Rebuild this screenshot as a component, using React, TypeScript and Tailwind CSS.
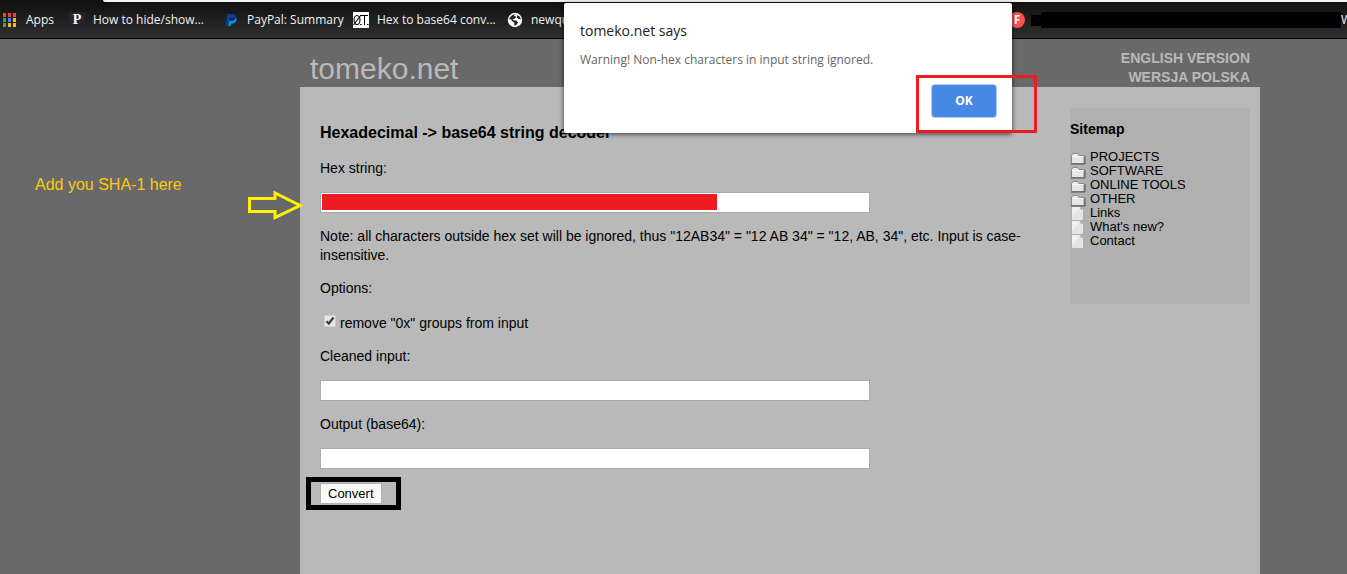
import React from "react";

const uiFont = "font-['Open_Sans','Noto_Sans',sans-serif]";

function AppsIcon() {
  const colors = [
    "#f44336", "#f44336", "#f44336",
    "#34a853", "#4285f4", "#fbbc05",
    "#34a853", "#fbbc05", "#fbbc05",
  ];
  return (
    <svg width="16" height="16" viewBox="0 0 16 16" aria-hidden="true">
      {colors.map((c, i) => (
        <rect key={i} x={1 + (i % 3) * 5} y={1 + Math.floor(i / 3) * 5} width="3" height="4" fill={c} />
      ))}
    </svg>
  );
}

function PIcon() {
  return (
    <span className="flex h-4 w-4 items-center justify-center bg-[#23252e] font-['Liberation_Serif',serif] text-[14px] leading-4 font-bold text-white">
      P
    </span>
  );
}

function PayPalIcon() {
  return (
    <svg width="16" height="16" viewBox="0 0 16 16" aria-hidden="true">
      <path d="M6.2 5h5.6c1.6.7 2 2 1.6 3.6-.5 2-2 2.900-4 2.900h-1L7.700 14H5z" fill="#009cde" />
      <path d="M4.600 2h5c2.500 0 3.700 1.300 3.200 3.600-.5 2.500-2.300 3.400-4.600 3.400H6.400L5.500 13H2.600z" fill="#0b3f9a" />
      <path d="M6.900 6h5.600c-.8 2.300-2.400 3-4.300 3H6.400z" fill="#012169" />
    </svg>
  );
}

function ZeroTIcon() {
  return (
    <svg width="16" height="16" viewBox="0 0 16 16" aria-hidden="true">
      <rect width="16" height="16" fill="#fff" />
      <g fill="none" stroke="#000" strokeWidth="1.1">
        <ellipse cx="4" cy="8" rx="3" ry="4.500" />
        <path d="M0.500 13L8 3M8 3.500h7M11.500 3.500v9.500M7 12.500h1.500M14 12.500h1.500" />
      </g>
    </svg>
  );
}

function GlobeIcon() {
  return (
    <svg width="16" height="16" viewBox="0 0 16 16" aria-hidden="true">
      <circle cx="8" cy="8" r="7.200" fill="#fff" />
      <path
        d="M2 7.500C3 4.500 5.500 2.500 8 2.300L7 4l2 .6-.5 1.700-2.500.8.300 1.200 3 .2 1.700 1.700-1.200 2.300-2.600 1.300.2-3-2-1.300L4 7.200z"
        fill="#222"
      />
      <path d="M10.300 3l2.600 1.700 1 2.600-2.400-.4-1.500-1.700z" fill="#222" />
    </svg>
  );
}

function FIcon() {
  return (
    <span className="flex h-4 w-4 items-center justify-center rounded-full bg-[#fb5252] text-[12px] leading-4 font-bold text-white">
      F
    </span>
  );
}

function Bookmark({ icon, label, width }: { icon: React.ReactNode; label: string; width: string }) {
  return (
    <a href="#" className={`flex shrink-0 items-center gap-2 whitespace-nowrap ${width}`}>
      {icon}
      {label}
    </a>
  );
}

function BookmarksBar() {
  return (
    <div className="bg-[#111]">
      <div className="ml-[103px] h-0.5 rounded-bl-sm bg-[#f1f3f4]" />
      <nav
        className={`flex h-[37px] items-center overflow-hidden border-b border-black bg-linear-to-b from-[#111] to-[#303030] pl-0.5 text-[12px] leading-4 text-[#f1f1f1] ${uiFont}`}
      >
        <Bookmark icon={<AppsIcon />} label="Apps" width="w-[67px]" />
        <Bookmark icon={<PIcon />} label="How to hide/show..." width="w-[154px]" />
        <Bookmark icon={<PayPalIcon />} label="PayPal: Summary" width="w-[130px]" />
        <Bookmark icon={<ZeroTIcon />} label="Hex to base64 conv..." width="w-[154px]" />
        <Bookmark icon={<GlobeIcon />} label="newqu" width="w-[502px]" />
        <FIcon />
        <div className="ml-1.5 flex min-w-0 flex-1 items-center">
          <span className="h-[11px] w-2.5 bg-black" />
          <span className="h-4 flex-1 bg-black" />
          <span className="w-1.5 overflow-hidden">W</span>
        </div>
      </nav>
    </div>
  );
}

function FolderIcon() {
  return (
    <svg width="16" height="13" viewBox="0 0 16 13" aria-hidden="true">
      <path d="M1.500 3.500L3 1.500h4.500L9 3.500h5v8H1.500z" fill="#e6e6e6" stroke="#8a8a8a" />
      <path d="M2.500 4.500h11M3.500 2.500h3.500" stroke="#fafafa" />
      <path d="M1 12h14V4" fill="none" stroke="#555" />
    </svg>
  );
}

function PageIcon() {
  return (
    <svg width="16" height="14" viewBox="0 0 16 14" aria-hidden="true">
      <path d="M2 1h8.500L13 3.500V14H2z" fill="#e4e4e4" />
      <path d="M2 1h8.500L2 11z" fill="#f0f0f0" />
      <path d="M10.500 1L13 3.500h-2.500z" fill="#999" />
    </svg>
  );
}

const sitemap = [
  { label: "PROJECTS", folder: true },
  { label: "SOFTWARE", folder: true },
  { label: "ONLINE TOOLS", folder: true },
  { label: "OTHER", folder: true },
  { label: "Links", folder: false },
  { label: "What's new?", folder: false },
  { label: "Contact", folder: false },
];

function Sitemap() {
  return (
    <aside className="mt-[21px] h-[196px] w-[180px] shrink-0 bg-[#b0b0b0] pt-3">
      <h2 className="text-[14px] leading-[19px] font-bold">Sitemap</h2>
      <ul className="mt-[11px] text-[13px] leading-[14px]">
        {sitemap.map((item) => (
          <li key={item.label}>
            <a href="#" className="flex h-3.5 items-start gap-1">
              <span className={item.folder ? "w-4 pt-0.5" : "w-4"}>{item.folder ? <FolderIcon /> : <PageIcon />}</span>
              {item.label}
            </a>
          </li>
        ))}
      </ul>
    </aside>
  );
}

const fieldClass = "block h-[21px] w-full max-w-[550px] border border-[#a9a9a9] bg-white px-0.5 text-[13px] outline-none";

function Decoder() {
  return (
    <main className="min-w-0 flex-1 pt-[35px] text-[14px] leading-[19px]">
      <h1 className="text-[16px] leading-[22px] font-bold">Hexadecimal -&gt; base64 string decoder</h1>
      <form className="mt-[15px] flex flex-col items-start gap-3.5" onSubmit={(e) => e.preventDefault()}>
        <label htmlFor="hex">Hex string:</label>
        <div className="relative w-full max-w-[550px]">
          <input id="hex" type="text" className={fieldClass} />
          <div className="absolute top-0.5 left-0.5 h-4 w-[395px] bg-[#ed1c24]" />
        </div>
        <p>
          Note: all characters outside hex set will be ignored, thus "12AB34" = "12 AB 34" = "12, AB, 34", etc. Input is
          case-insensitive.
        </p>
        <p>Options:</p>
        <div className="flex h-[21px] items-end gap-1 pl-1">
          <span className="relative mb-1.5 h-3 w-3">
            <input
              id="strip"
              type="checkbox"
              defaultChecked
              className="peer block h-3 w-3 appearance-none rounded-[1px] border border-[#cfcfcf] bg-[#e8e8e8]"
            />
            <svg
              className="pointer-events-none absolute inset-0 hidden peer-checked:block"
              width="12"
              height="12"
              viewBox="0 0 12 12"
              aria-hidden="true"
            >
              <path d="M2.500 6.200L4.800 8.500L9.500 2.500" fill="none" stroke="#3c3c3c" strokeWidth="2.200" />
            </svg>
          </span>
          <label htmlFor="strip">remove "0x" groups from input</label>
        </div>
        <label htmlFor="cleaned">Cleaned input:</label>
        <input id="cleaned" type="text" className={fieldClass} />
        <label htmlFor="output">Output (base64):</label>
        <input id="output" type="text" className={fieldClass} />
        <div className="relative">
          <button
            type="submit"
            className="block h-[21px] border border-[#b0b0b0] bg-linear-to-b from-[#f6f6f6] to-white px-[7px] text-[13px] leading-[19px]"
          >
            Convert
          </button>
          <div className="pointer-events-none absolute -top-1.5 -left-3.5 h-[33px] w-[95px] border-5 border-black" />
        </div>
      </form>
    </main>
  );
}

function AlertDialog() {
  return (
    <div
      role="alertdialog"
      aria-labelledby="alert-title"
      aria-describedby="alert-text"
      className={`absolute top-[3px] left-[564px] flex h-[130px] w-[448px] flex-col rounded-[2px] bg-white px-4 py-4 shadow-[0_1px_5px_rgba(0,0,0,0.7)] ${uiFont}`}
    >
      <h2 id="alert-title" className="text-[14px] leading-6 text-[#222]">
        tomeko.net says
      </h2>
      <p id="alert-text" className="mt-[7px] text-[12px] leading-5 text-[#666]">
        Warning! Non-hex characters in input string ignored.
      </p>
      <div className="relative mt-auto self-end">
        <button
          type="button"
          className="block h-8 w-16 rounded-[3px] bg-[#4688e4] text-[12px] font-bold text-white shadow-[0_0_0_1px_#b5d2f5]"
        >
          OK
        </button>
        <div className="pointer-events-none absolute -top-2.5 -left-4 h-[58px] w-[121px] border-3 border-[#ed1c24]" />
      </div>
    </div>
  );
}

export default function App() {
  return (
    <div className="relative flex min-h-screen flex-col overflow-hidden bg-[#696969] font-['Liberation_Sans',Arial,sans-serif] text-black">
      <BookmarksBar />
      <div className="ml-[300px] flex w-full max-w-[960px] flex-1 flex-col">
        <header className="flex h-12 items-end justify-between px-2.5 text-[#b9b9b9]">
          <a href="#" className="text-[30px] leading-9">
            tomeko.net
          </a>
          <div className="flex flex-col items-end text-[14px] leading-[19px] font-bold">
            <a href="#">ENGLISH VERSION</a>
            <a href="#">WERSJA POLSKA</a>
          </div>
        </header>
        <div className="flex flex-1 items-start gap-5 bg-[#b9b9b9] pr-2.5 pl-5">
          <Decoder />
          <Sitemap />
        </div>
      </div>
      <p className="absolute top-[175px] left-[35px] text-[16px] leading-5 text-[#ffc90e]">Add you SHA-1 here</p>
      <svg className="absolute top-[190px] left-[247px]" width="56" height="30" viewBox="0 0 56 30" aria-hidden="true">
        <path d="M2.500 8.500H28V3L53 15.500L28 27.500V21.500H2.500z" fill="none" stroke="#fff200" strokeWidth="3" />
      </svg>
      <AlertDialog />
    </div>
  );
}
